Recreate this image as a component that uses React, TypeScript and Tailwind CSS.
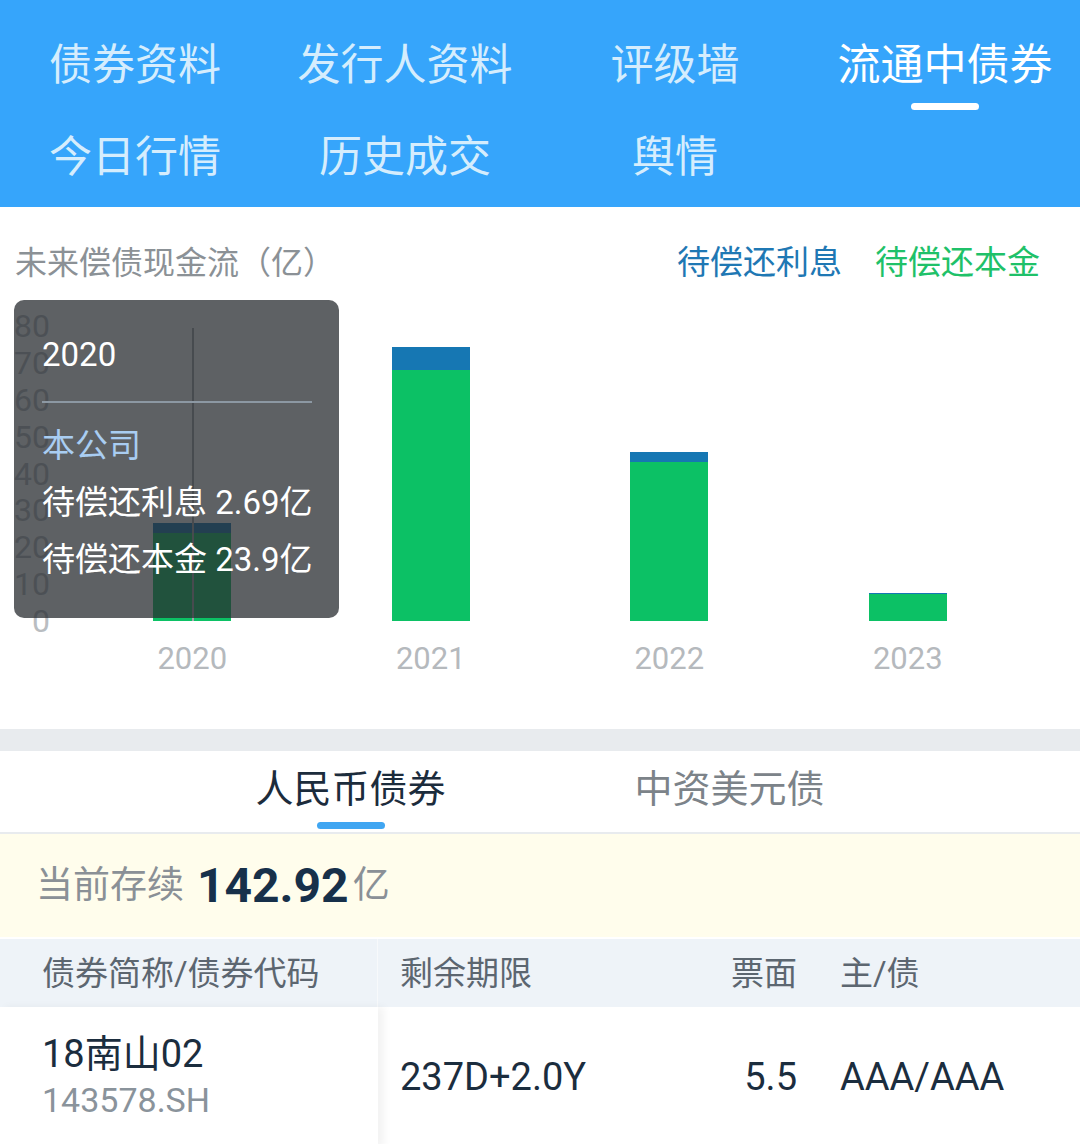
import React from "react";

const topTabs = [
  ["债券资料", "发行人资料", "评级墙", "流通中债券"],
  ["今日行情", "历史成交", "舆情", ""],
];

const bars = [
  { year: "2020", interest: 2.69, principal: 23.9 },
  { year: "2021", interest: 6.2, principal: 68 },
  { year: "2022", interest: 2.7, principal: 43 },
  { year: "2023", interest: 0.3, principal: 7.3 },
];

const PX_PER_UNIT = 295 / 80;
const yTicks = ["80", "70", "60", "50", "40", "30", "20", "10", "0"];

const Header = () => (
  <div className="bg-[#36a5fb] pb-[2px]">
    {topTabs.map((row, ri) => (
      <div key={ri} className="grid grid-cols-4">
        {row.map((label, ci) => {
          const active = ri === 0 && ci === 3;
          return (
            <div
              key={ci}
              className={
                ri === 0
                  ? "flex h-[112px] flex-col items-center pt-[44px]"
                  : "flex h-[93px] flex-col items-center pt-[24px]"
              }
            >
              <span
                className={`text-[43px] leading-[43px] ${active ? "text-white" : "text-[#d5edfd]"}`}
              >
                {label}
              </span>
              {active && <div className="mt-[16px] h-[7px] w-[68px] rounded-full bg-white" />}
            </div>
          );
        })}
      </div>
    ))}
  </div>
);

const Chart = () => (
  <div className="relative bg-white pb-[55px]">
    <div className="flex items-center justify-between pl-[15px] pr-[40px] pt-[39px]">
      <span className="text-[32px] leading-[32px] text-[#8b9196]">未来偿债现金流（亿）</span>
      <div className="flex gap-[33px] text-[33px] leading-[33px]">
        <span className="text-[#1f78b4]">待偿还利息</span>
        <span className="text-[#1fc169]">待偿还本金</span>
      </div>
    </div>

    <div className="mt-[47px] flex">
      <div className="flex h-[295px] w-[73px] flex-col items-end justify-between pr-[23px]">
        {yTicks.map((t) => (
          <div key={t} className="flex h-0 items-center text-[32px] leading-[32px] text-[#b9bdc1]">
            {t}
          </div>
        ))}
      </div>
      <div className="mr-[53px] flex flex-1">
        {bars.map((b, i) => (
          <div key={b.year} className="flex flex-1 flex-col items-center">
            <div className="relative flex h-[295px] w-full flex-col items-center justify-end">
              <div
                className="w-[78px] bg-[#1677b3]"
                style={{ height: b.interest * PX_PER_UNIT }}
              />
              <div
                className="w-[78px] bg-[#0cc165]"
                style={{ height: b.principal * PX_PER_UNIT }}
              />
              {i === 0 && (
                <div className="absolute bottom-0 left-1/2 top-[2px] w-[2px] bg-[#a4a8ac]" />
              )}
            </div>
            <span className="mt-[22px] text-[31px] leading-[31px] text-[#b5b9bd]">{b.year}</span>
          </div>
        ))}
      </div>
    </div>

    <div className="absolute left-[14px] top-[93px] h-[318px] w-[325px] whitespace-nowrap rounded-[10px] bg-[rgba(40,44,48,0.75)] pl-[28px] pr-[27px] pt-[38px] text-[33px] leading-[34px]">
      <div className="text-white">2020</div>
      <div className="mt-[29px] h-[2px] bg-[#8c98a3]" />
      <div className="mt-[26px] text-[#a9cdf2]">本公司</div>
      <div className="mt-[23px] text-white">待偿还利息 2.69亿</div>
      <div className="mt-[23px] text-white">待偿还本金 23.9亿</div>
    </div>
  </div>
);

const SubTabs = () => (
  <div className="border-b-2 border-[#e8ebee] bg-white">
    <div className="mx-auto flex w-[758px]">
      <div className="flex h-[81px] flex-1 flex-col items-center pt-[19px]">
        <span className="text-[38px] leading-[38px] text-[#1c2c3c]">人民币债券</span>
        <div className="mt-[14px] h-[7px] w-[68px] rounded-full bg-[#40a6f2]" />
      </div>
      <div className="flex h-[81px] flex-1 flex-col items-center pt-[19px]">
        <span className="text-[38px] leading-[38px] text-[#7c8389]">中资美元债</span>
      </div>
    </div>
  </div>
);

const Summary = () => (
  <div className="flex h-[103px] items-center bg-[#fffdec] pl-[36px]">
    <span className="text-[37px] text-[#8a9096]">当前存续</span>
    <span className="ml-[13px] text-[48px] font-bold text-[#17304a]">142.92</span>
    <span className="ml-[4px] text-[37px] text-[#8a9096]">亿</span>
  </div>
);

const Table = () => (
  <div className="mt-[2px]">
    <div className="flex h-[68px] items-center bg-[#eef3f8] text-[33px] leading-[33px] text-[#5c6670]">
      <div className="flex h-full w-[378px] items-center border-r border-[#f7f9fb] pl-[42px]">
        债券简称/债券代码
      </div>
      <div className="w-[302px] pl-[22px]">剩余期限</div>
      <div className="w-[117px] text-right">票面</div>
      <div className="flex-1 pl-[43px]">主/债</div>
    </div>
    <div className="flex h-[140px] items-center bg-white text-[38px] text-[#1b2d3e]">
      <div className="relative z-10 flex h-full w-[378px] flex-col justify-center bg-white pl-[42px] shadow-[6px_0_8px_rgba(0,0,0,0.05)]">
        <div className="leading-[46px]">18南山02</div>
        <div className="text-[34px] leading-[46px] text-[#8a939b]">143578.SH</div>
      </div>
      <div className="w-[302px] pl-[22px]">237D+2.0Y</div>
      <div className="w-[117px] text-right">5.5</div>
      <div className="flex-1 pl-[43px]">AAA/AAA</div>
    </div>
  </div>
);

export default function App() {
  return (
    <div className="h-[1144px] w-[1080px] overflow-hidden bg-white font-[Roboto,'Noto_Sans_CJK_SC',sans-serif]">
      <Header />
      <Chart />
      <div className="h-[22px] bg-[#e8ebee]" />
      <SubTabs />
      <Summary />
      <Table />
    </div>
  );
}
